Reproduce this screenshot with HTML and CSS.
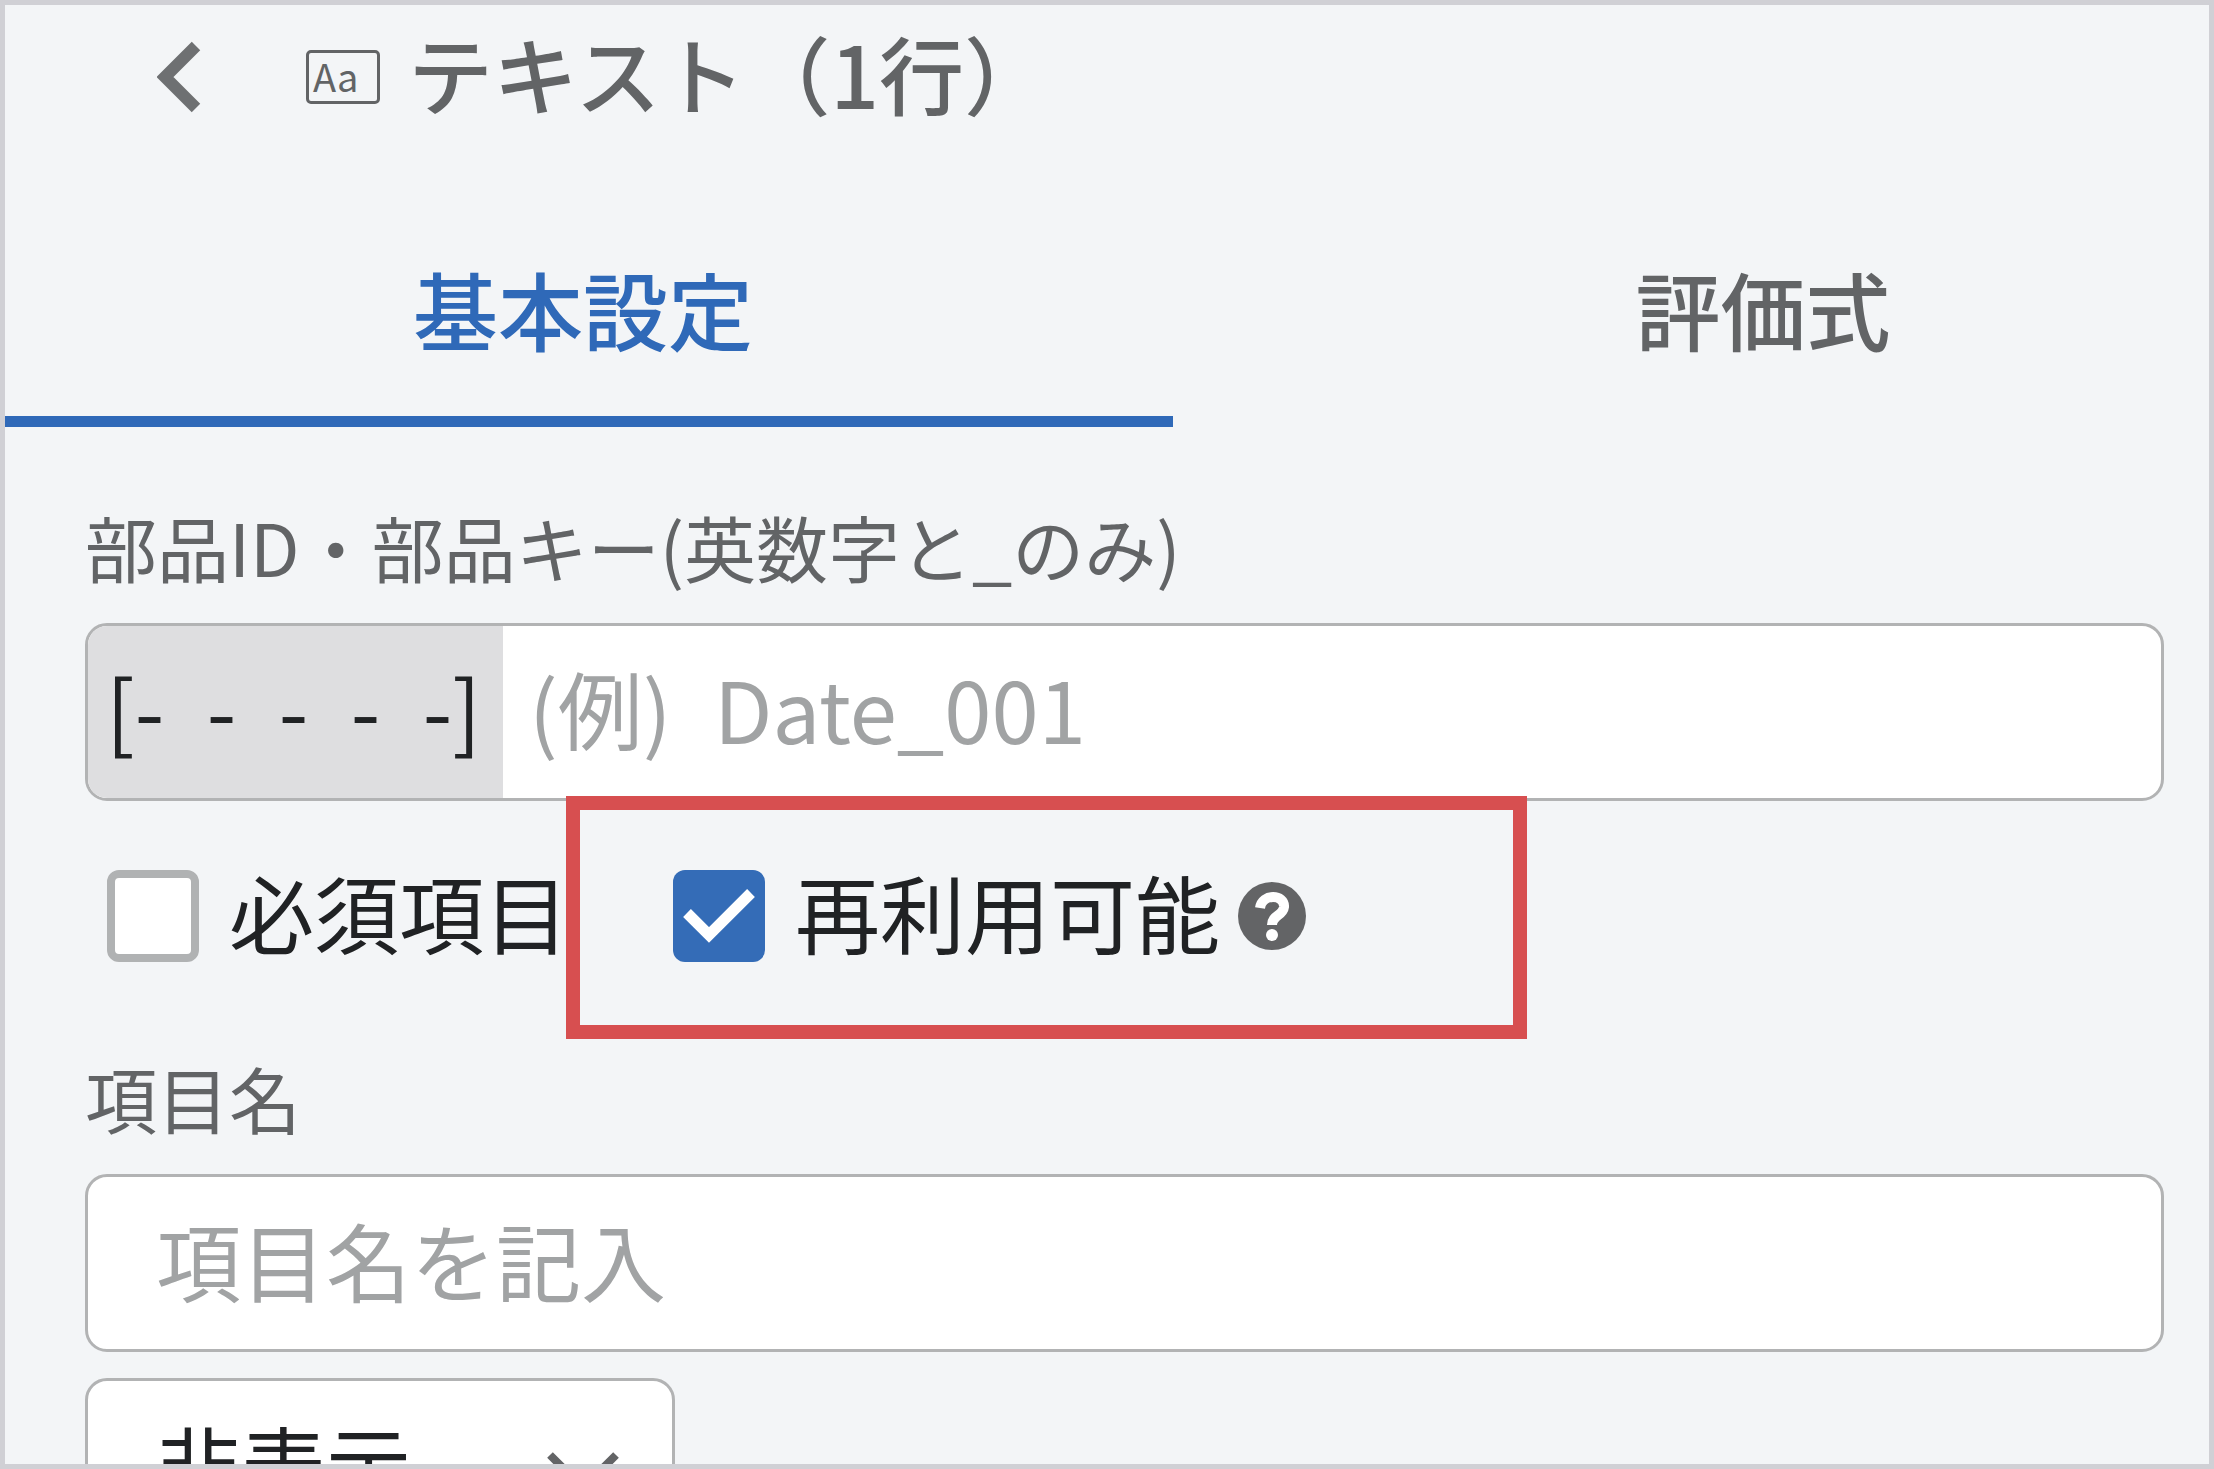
FILE: index.html
```
<!DOCTYPE html>
<html lang="ja">
<head>
  <meta charset="UTF-8" />
  <meta name="viewport" content="width=device-width, initial-scale=1.0"/>
  <title>テキスト（1行）</title>
  <link rel="stylesheet" href="styles.css">
</head>
<body>
  <div class="panel">
    <header class="panel-header">
      <button type="button" class="back" aria-label="戻る">
        <svg viewBox="0 0 44 72" width="44" height="72">
          <path d="M39 5 L8 36 L39 67" fill="none" stroke="#6e7072" stroke-width="12"/>
        </svg>
      </button>
      <span class="type-icon">Aa</span>
      <h1>テキスト（1行）</h1>
    </header>

    <nav class="tabs">
      <button type="button" class="tab active">基本設定</button>
      <button type="button" class="tab">評価式</button>
    </nav>

    <form class="settings">
      <label class="field-label" for="partId">部品ID・部品キー(英数字と_のみ)</label>
      <div class="input-group">
        <span class="prefix">[-&ensp;-&ensp;-&ensp;-&ensp;-]</span>
        <input type="text" id="partId" placeholder="(例)&ensp;Date_001" />
      </div>

      <div class="checks">
        <label class="check"><input type="checkbox" /><span>必須項目</span></label>
        <div class="reuse">
          <label class="check"><input type="checkbox" checked /><span>再利用可能</span></label>
          <button type="button" class="help" aria-label="ヘルプ">
            <svg viewBox="0 0 68 68" width="68" height="68">
              <circle cx="34" cy="34" r="34" fill="#636466"/>
              <path d="M22 26 C24 11 47 12 46 25 C45 34 34 33 34 43" fill="none" stroke="#fff" stroke-width="10"/>
              <circle cx="34" cy="53" r="6" fill="#fff"/>
            </svg>
          </button>
        </div>
      </div>

      <label class="field-label" for="itemName">項目名</label>
      <input type="text" id="itemName" class="text-input" placeholder="項目名を記入" />

      <div class="select-wrap">
        <select aria-label="表示設定">
          <option>非表示</option>
          <option>表示</option>
        </select>
        <svg class="chevron" viewBox="0 0 74 44" width="74" height="44">
          <path d="M4 4 L37 37 L70 4" fill="none" stroke="#636466" stroke-width="8"/>
        </svg>
      </div>
    </form>
  </div>
</body>
</html>
```

FILE: styles.css
```
*,
*::after {
  box-sizing: border-box;
}

body {
  margin: 0;
  font-family: "Noto Sans CJK JP", sans-serif;
  font-size: 85px;
  line-height: 124px;
  color: #202224;
}

button,
input,
select {
  font: inherit;
  color: inherit;
}

button {
  padding: 0;
  border: none;
  background: none;
  cursor: pointer;
}

.panel {
  height: 100vh;
  overflow: hidden;
  background: #f3f5f7;
  border: 5px solid #d0d0d5;
}

/* header */
.panel-header {
  display: flex;
  align-items: center;
  height: 144px;
  padding-left: 152px;
  color: #626466;
}

.back {
  display: flex;
  margin-right: 105px;
}

.type-icon {
  width: 74px;
  height: 54px;
  padding-left: 4px;
  border: 3px solid #626466;
  border-radius: 5px;
  font-size: 38px;
  line-height: 46px;
}

h1 {
  margin: 0 0 10px 28px;
  font-size: 85px;
  font-weight: 500;
}

/* tabs */
.tabs {
  display: flex;
  margin: 50px 0 60px -12px;
}

.tab {
  flex: 0 0 calc(50% + 72px);
  height: 228px;
  border-bottom: 11px solid transparent;
  font-weight: 500;
  color: #626466;
}

.tab.active {
  color: #2f69b8;
  border-bottom-color: #2f69b8;
}

/* form */
.settings {
  padding: 0 45px 0 80px;
}

.field-label {
  display: block;
  padding-bottom: 18px;
  font-size: 72px;
  line-height: 118px;
  color: #626466;
}

.input-group,
.text-input,
select {
  width: 100%;
  height: 178px;
  background: #fff;
  border: 3px solid #b2b3b4;
  border-radius: 22px;
}

.input-group {
  display: flex;
  overflow: hidden;
}

.prefix {
  display: flex;
  align-items: center;
  padding: 0 22px 10px 18px;
  background: #dedee0;
}

.input-group input {
  flex: 1;
  min-width: 0;
  padding: 0 26px 10px;
  border: none;
  background: none;
}

.text-input {
  display: block;
  padding: 0 68px 10px;
}

input::placeholder {
  color: #a1a3a4;
  opacity: 1;
}

.checks {
  display: flex;
  align-items: center;
  height: 237px;
  padding: 0 0 8px 22px;
}

.check {
  display: flex;
  align-items: center;
  gap: 30px;
  white-space: nowrap;
}

.check span {
  padding-bottom: 10px;
}

.check input {
  appearance: none;
  flex: none;
  width: 92px;
  height: 92px;
  margin: 0;
  background: #fff;
  border: 8px solid #b0b2b3;
  border-radius: 12px;
}

.check input:checked {
  border: none;
  background: #346cb7 url("data:image/svg+xml,%3Csvg xmlns='http://www.w3.org/2000/svg' viewBox='0 0 92 92'%3E%3Cpath d='M14 43 L36 65 L78 23' fill='none' stroke='white' stroke-width='11'/%3E%3C/svg%3E");
}

.reuse {
  position: relative;
  display: flex;
  align-items: center;
  gap: 18px;
  margin-left: 104px;
}

/* red frame around the reuse option */
.reuse::after {
  content: "";
  position: absolute;
  top: -53px;
  left: -107px;
  width: 961px;
  height: 243px;
  border: 14px solid #d74f50;
  pointer-events: none;
}

.help {
  display: flex;
}

.select-wrap {
  position: relative;
  width: 590px;
  margin-top: 26px;
}

select {
  appearance: none;
  display: block;
  padding: 0 68px 10px;
}

.chevron {
  position: absolute;
  right: 55px;
  top: 73px;
  pointer-events: none;
}
```
